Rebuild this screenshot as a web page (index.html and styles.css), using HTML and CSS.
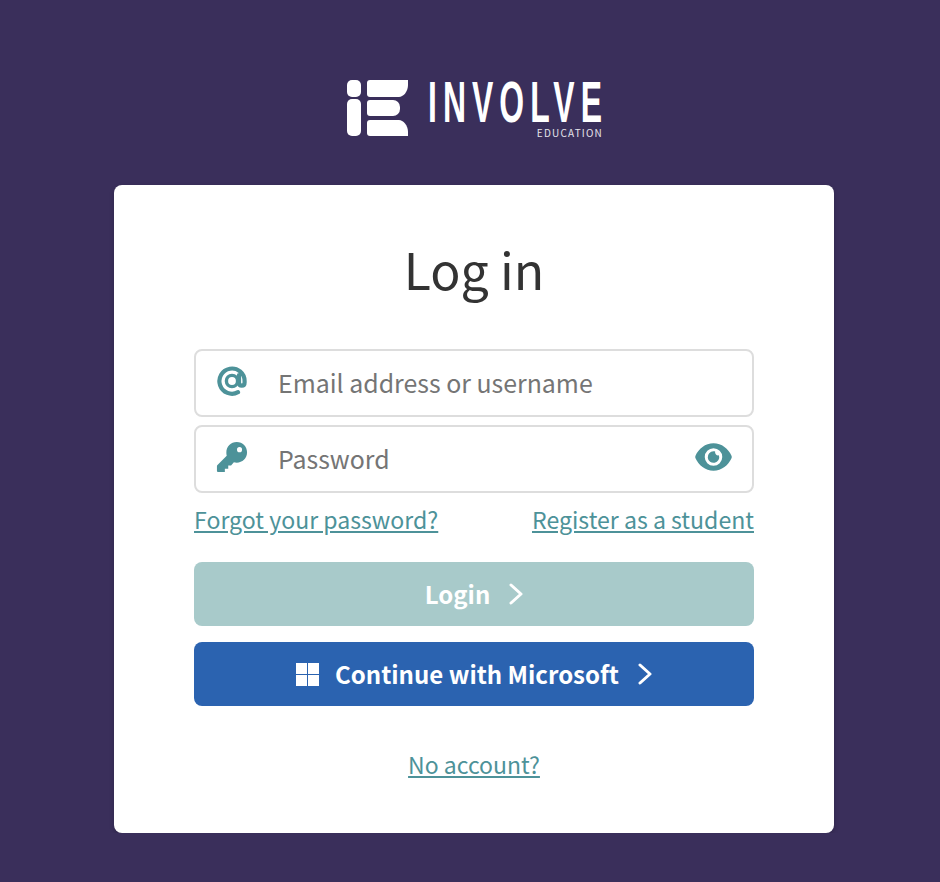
FILE: index.html
```html
<!DOCTYPE html>
<html lang="en">
<head>
    <meta charset="UTF-8">
    <meta name="viewport" content="width=device-width, initial-scale=1.0">
    <title>Log in</title>
    <link rel="stylesheet" href="styles.css">
</head>
<body>

    <header class="brand">
        <svg class="brand-mark" viewBox="0 0 61 56" width="61" height="56">
            <path fill="#fff" d="M5 0h4a5 5 0 0 1 5 5v7a5 5 0 0 1-5 5H5a5 5 0 0 1-5-5V5a5 5 0 0 1 5-5z"/>
            <path fill="#fff" d="M5 19h4a5 5 0 0 1 5 5v27a5 5 0 0 1-5 5H5a5 5 0 0 1-5-5V24a5 5 0 0 1 5-5z"/>
            <path fill="#fff" d="M23 0h38v5c0 7-5 12-9 12H23a3 3 0 0 1-3-3V3a3 3 0 0 1 3-3z"/>
            <path fill="#fff" d="M23 20h23a7 7 0 0 1 7 7v2a7 7 0 0 1-7 7H23a3 3 0 0 1-3-3V23a3 3 0 0 1 3-3z"/>
            <path fill="#fff" d="M23 40h29c4 0 9 5 9 12v4H23a3 3 0 0 1-3-3V43a3 3 0 0 1 3-3z"/>
        </svg>
        <div class="brand-text">
            <span class="brand-name">INVOLVE</span>
            <span class="brand-sub">EDUCATION</span>
        </div>
    </header>

    <main class="card">
        <h1>Log in</h1>

        <form class="login-form">
            <div class="field">
                <svg class="field-icon" viewBox="0 0 32 32" width="32" height="32">
                    <path fill="none" stroke="#4d9299" stroke-width="4.2" stroke-linecap="round" d="M22 27.200a12.600 12.600 0 1 1 6.600-11.200v1.400c0 2-1.200 3.200-2.800 3.200s-2.800-1.200-2.800-3.200V10"/>
                    <circle cx="16" cy="16" r="5.600" fill="none" stroke="#4d9299" stroke-width="3.400"/>
                </svg>
                <input type="text" placeholder="Email address or username">
            </div>
            <div class="field">
                <svg class="field-icon" viewBox="0 0 34 34" width="32" height="32">
                    <path fill="#4d9299" fill-rule="evenodd" d="M22 1c6.400 0 11 4.800 11 11 0 6.400-5 11-11 11-1.200 0-2 0-3-.4l-3 3.400h-3v3.400h-3.600V33H2.500C1.600 33 1 32.400 1 31.500V27c0-.6.2-1 .6-1.400L11.400 15.600C11 14.400 11 13.400 11 12 11 5.800 15.800 1 22 1zm3 5.500a2.700 2.700 0 1 0 0 5.400 2.700 2.700 0 0 0 0-5.400z"/>
                </svg>
                <input type="password" placeholder="Password">
                <svg class="eye-icon" viewBox="0 0 38 28" width="37" height="28">
                    <path fill="#4d9299" fill-rule="evenodd" d="M19 0c8.400 0 15.400 5.600 18.600 13 .2.600.2 1.400 0 2C34.400 22.400 27.400 28 19 28S3.600 22.400.4 15c-.2-.6-.2-1.400 0-2C3.600 5.600 10.600 0 19 0zm0 5a9 9 0 1 0 0 18 9 9 0 0 0 0-18z"/>
                    <path fill="#4d9299" fill-rule="evenodd" d="M19 8.200c.6 0 1.200.1 1.700.2a3.200 3.200 0 0 0 3.900 3.900A5.900 5.900 0 1 1 19 8.200z"/>
                </svg>
            </div>

            <div class="form-links">
                <a href="#">Forgot your password?</a>
                <a href="#">Register as a student</a>
            </div>

            <button type="button" class="btn btn-login">
                Login
                <svg class="chevron" viewBox="0 0 14 22" width="14" height="22"><path fill="none" stroke="#fff" stroke-width="3" stroke-linecap="round" stroke-linejoin="round" d="M2 2l10 9-10 9"/></svg>
            </button>
            <button type="button" class="btn btn-microsoft">
                <svg class="ms-logo" viewBox="0 0 23 23" width="23" height="23">
                    <path fill="#fff" d="M0 0h11v11H0zM12 0h11v11H12zM0 12h11v11H0zM12 12h11v11H12z"/>
                </svg>
                Continue with Microsoft
                <svg class="chevron" viewBox="0 0 14 22" width="14" height="22"><path fill="none" stroke="#fff" stroke-width="3" stroke-linecap="round" stroke-linejoin="round" d="M2 2l10 9-10 9"/></svg>
            </button>
        </form>

        <p class="no-account"><a href="#">No account?</a></p>
    </main>

</body>
</html>
```

FILE: styles.css
```css
body {
    font-family: "Noto Sans CJK SC", "Noto Sans", sans-serif;
    background-color: #3a2f5b;
    margin: 0;
    padding: 80px 0 0 8px;
    color: #333;
}
.brand {
    display: flex;
    justify-content: center;
    gap: 20px;
    height: 105px;
    padding-left: 2px;
}
.brand-mark {
    display: block;
}
.brand-text {
    width: 175px;
    display: flex;
    flex-direction: column;
    align-items: flex-end;
    color: white;
}
.brand-name {
    align-self: flex-start;
    font-family: "Liberation Sans", sans-serif;
    font-weight: bold;
    font-size: 58px;
    line-height: 44px;
    letter-spacing: 11px;
    white-space: nowrap;
    transform: scaleX(0.55);
    transform-origin: left center;
}
.brand-sub {
    font-size: 10px;
    line-height: 12px;
    letter-spacing: 1.2px;
    margin-top: 3px;
    color: #e4e2ea;
}
.card {
    background-color: white;
    border-radius: 8px;
    box-shadow: 0 2px 5px rgba(0,0,0,0.2);
    width: 720px;
    box-sizing: border-box;
    margin: 0 auto;
    padding: 48px 80px 46px;
    height: 648px;
}
.card h1 {
    font-size: 50px;
    font-weight: 400;
    line-height: 70px;
    text-align: center;
    margin: 0 0 46px;
}
.login-form {
    display: flex;
    flex-direction: column;
}
.field {
    display: flex;
    align-items: center;
    height: 68px;
    box-sizing: border-box;
    border: 2px solid #ddd;
    border-radius: 8px;
    margin-bottom: 8px;
    padding: 0 20px;
}
.field-icon {
    flex: none;
    margin-top: -4px;
}
.field input {
    flex: 1;
    min-width: 0;
    border: none;
    outline: none;
    background: none;
    font-family: inherit;
    font-size: 24.9px;
    color: #333;
    margin-left: 30px;
    padding: 0 0 2px;
}
.field input::placeholder {
    color: #757575;
    opacity: 1;
}
.eye-icon {
    flex: none;
    margin-top: -5px;
}
.form-links {
    display: flex;
    justify-content: space-between;
    margin: 3px 0 28px;
    font-size: 23.1px;
    line-height: 30px;
}
a {
    color: #4d9299;
}
.btn {
    display: flex;
    align-items: center;
    justify-content: center;
    height: 64px;
    border: none;
    border-radius: 8px;
    color: white;
    font-family: inherit;
    font-size: 24px;
    font-weight: 600;
    margin-bottom: 16px;
    padding: 0 0 2px;
    cursor: pointer;
}
.btn-login {
    background-color: #a8caca;
}
.btn-microsoft {
    background-color: #2b63b0;
}
.chevron {
    margin: 2px 0 0 19px;
}
.ms-logo {
    margin: 2px 16px 0 0;
}
.no-account {
    text-align: center;
    font-size: 23px;
    line-height: 30px;
    margin: 27px 0 0;
}
```
